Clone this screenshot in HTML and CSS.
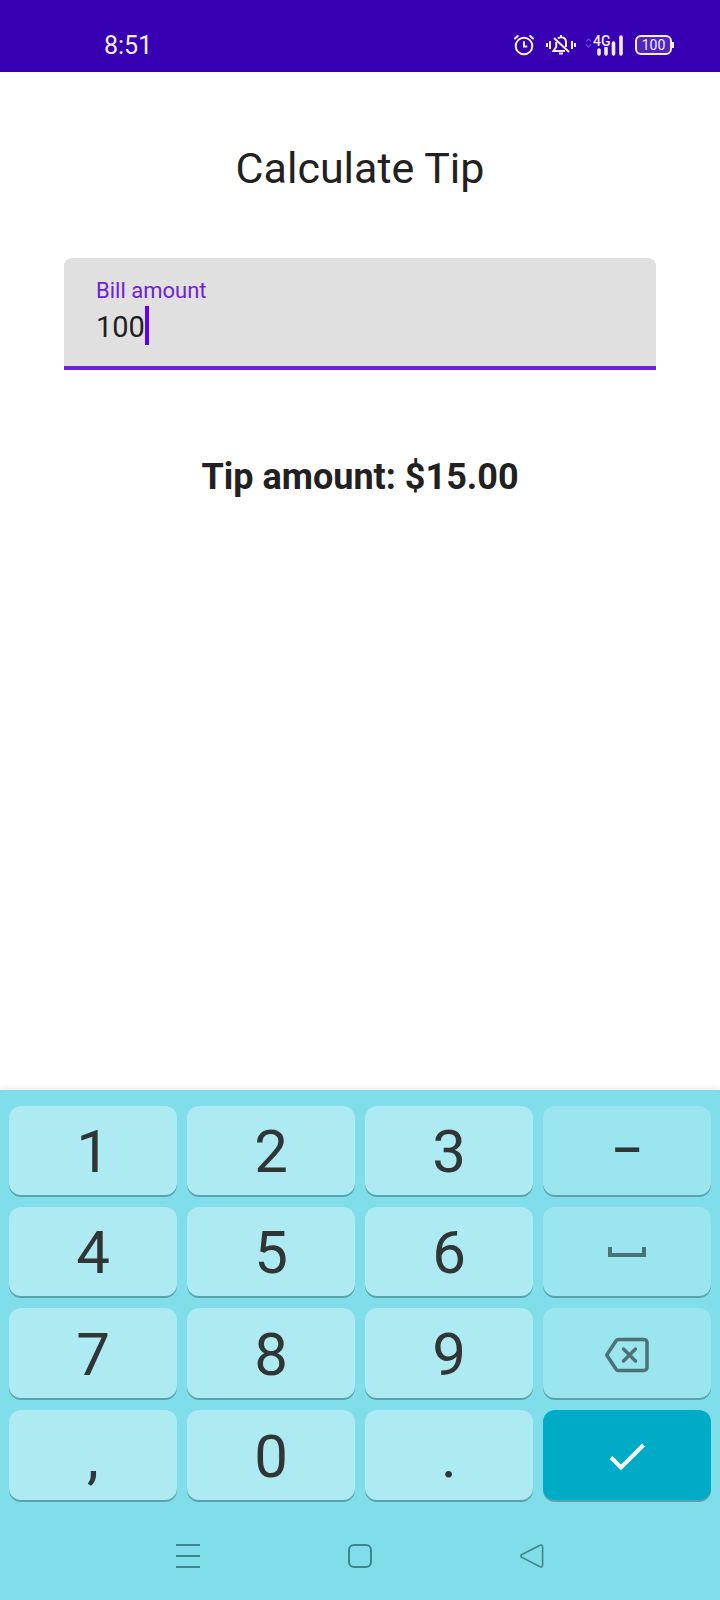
FILE: index.html
```html
<!DOCTYPE html>
<html lang="en">
<head>
<meta charset="utf-8">
<meta name="viewport" content="width=device-width, initial-scale=1">
<title>Calculate Tip</title>
<link rel="stylesheet" href="styles.css">
</head>
<body>
<div class="screen">
  <header class="status-bar">
    <time class="clock">8:51</time>
    <div class="status-icons">
      <svg class="alarm" width="22" height="22" viewBox="0 0 22 22" fill="none" stroke="currentColor" stroke-width="2" stroke-linecap="round"><circle cx="11" cy="12" r="8.3"/><path d="M2 4.5 4.800 2M20 4.500 17.200 2M11 8v4.500h2.500"/></svg>
      <svg class="vibrate" width="32" height="22" viewBox="0 0 32 22" fill="none" stroke="currentColor" stroke-width="2"><path d="M2 9v4M5 7v8M27 7v8M30 9v4M9 4l15 14M13 4.500c1-1 2-1.300 3-1.300 3 0 5 2 5 5V13M11.200 8v5L8.500 17H20M16 1v2"/><path d="M14 19.500h4" stroke-width="2"/></svg>
      <svg class="signal" width="40" height="22" viewBox="0 0 40 22"><path d="M1 7.500 3.500 5 6 7.500M1 10.500 3.500 13 6 10.500" fill="none" stroke="#6a3fc9" stroke-width="1.500"/><path d="M14 16v4M21 14v6M28.500 9v11M36 3v17" stroke="currentColor" stroke-width="3.600" stroke-linecap="round"/><text class="network" x="8" y="12">4G</text></svg>
      <span class="battery">100</span>
    </div>
  </header>

  <main class="content">
    <h1 class="title">Calculate Tip</h1>
    <div class="field">
      <label class="field-label" for="bill">Bill amount</label>
      <div class="field-row">
        <input class="field-input" id="bill" type="text" inputmode="decimal" value="100" size="3">
        <span class="caret"></span>
      </div>
    </div>
    <p class="result">Tip amount: $15.00</p>
  </main>

  <section class="keyboard" aria-label="Keyboard">
    <div class="keys">
      <button class="key">1</button>
      <button class="key">2</button>
      <button class="key">3</button>
      <button class="key key-side key-dash">–</button>
      <button class="key">4</button>
      <button class="key">5</button>
      <button class="key">6</button>
      <button class="key key-side" aria-label="Space"><svg width="40" height="12" viewBox="0 0 40 12" fill="none" stroke="currentColor" stroke-width="4"><path d="M3 0v8h34V0"/></svg></button>
      <button class="key">7</button>
      <button class="key">8</button>
      <button class="key">9</button>
      <button class="key key-side" aria-label="Backspace"><svg width="46" height="36" viewBox="0 0 46 36" fill="none" stroke="currentColor" stroke-width="3.500" stroke-linejoin="round"><path d="M14.500 2.500H40a3 3 0 0 1 3 3v25a3 3 0 0 1-3 3H14.500a3 3 0 0 1-2.400-1.200L3 18.500q-.4-.5 0-1L12.100 3.700a3 3 0 0 1 2.400-1.200Z"/><path d="m19.500 12 12 12M31.500 12l-12 12" stroke-linecap="round"/></svg></button>
      <button class="key">,</button>
      <button class="key">0</button>
      <button class="key">.</button>
      <button class="key key-enter" aria-label="Done"><svg width="36" height="28" viewBox="0 0 36 28" fill="none" stroke="currentColor" stroke-width="4"><path d="M2 14.500 12 24.500 34.500 2"/></svg></button>
    </div>
    <nav class="nav-bar" aria-label="System">
      <button class="nav-button" aria-label="Recent apps"><svg width="24" height="24" viewBox="0 0 24 24" fill="none" stroke="currentColor" stroke-width="2"><path d="M0 1h24M0 12h24M0 23h24"/></svg></button>
      <button class="nav-button" aria-label="Home"><svg width="24" height="24" viewBox="0 0 24 24" fill="none" stroke="currentColor" stroke-width="2"><rect x="1" y="1" width="22" height="22" rx="5"/></svg></button>
      <button class="nav-button" aria-label="Back"><svg width="24" height="24" viewBox="0 0 24 24" fill="none" stroke="currentColor" stroke-width="1.600"><path d="M1.500 10.800 20 1.300q2.600-1 2.600 1.700v18q0 2.700-2.600 1.700L1.500 13.200q-1.300-1.200 0-2.400Z"/></svg></button>
    </nav>
  </section>
</div>
</body>
</html>
```
FILE: styles.css
```css
* {
  box-sizing: border-box;
}

body {
  margin: 0;
  background: #fff;
  color: #212121;
  font-family: Roboto, "Noto Sans", sans-serif;
}

.screen {
  display: flex;
  flex-direction: column;
  min-height: 100vh;
}

button {
  margin: 0;
  border: 0;
  padding: 0;
  background: none;
  color: inherit;
  font: inherit;
}

svg {
  display: block;
}

/* Status bar */
.status-bar {
  display: flex;
  justify-content: space-between;
  padding: 30px 46px 10px 104px;
  background: #3700b3;
  color: #f3edff;
}

.clock {
  font-size: 25px;
  line-height: 32px;
}

.status-icons {
  display: flex;
  align-items: center;
  height: 30px;
}

.vibrate {
  margin-left: 10px;
}

.signal {
  margin-left: 8px;
}

.network {
  fill: currentColor;
  stroke: #3700b3;
  stroke-width: 2px;
  paint-order: stroke;
  font-size: 14px;
  font-weight: 500;
}

.battery {
  position: relative;
  width: 37px;
  margin: 0 2px 0 10px;
  border: 2px solid currentColor;
  border-radius: 6px;
  background: #5226be;
  font-size: 14px;
  line-height: 16px;
  text-align: center;
}

.battery::after {
  content: "";
  position: absolute;
  top: 5px;
  right: -4px;
  width: 2px;
  height: 6px;
  background: currentColor;
}

/* Form */
.content {
  flex: 1;
  padding: 70px 64px 0;
}

.title {
  margin: 0 0 64px;
  font-size: 43px;
  font-weight: 400;
  line-height: 52px;
  text-align: center;
}

.field {
  height: 112px;
  padding: 20px 32px 0;
  border-bottom: 4px solid #711fe0;
  border-radius: 8px 8px 0 0;
  background: #e0e0e0;
}

.field-label {
  display: block;
  color: #6f22d6;
  font-size: 22px;
  line-height: 26px;
}

.field-row {
  display: flex;
  align-items: flex-start;
  margin-top: 2px;
}

.field-input {
  field-sizing: content;
  min-width: 0;
  height: 42px;
  border: 0;
  padding: 0;
  outline: 0;
  background: none;
  color: inherit;
  font: 29px/42px Roboto, "Noto Sans", sans-serif;
}

.caret {
  width: 4px;
  height: 39px;
  background: #6200ee;
}

.result {
  margin: 84px 0 0;
  font-size: 36px;
  font-weight: 700;
  line-height: 46px;
  text-align: center;
}

/* Keyboard */
.keyboard {
  padding: 16px 9px 0;
  background: #80deea;
  box-shadow: 0 0 8px rgba(0, 0, 0, 0.12);
}

.keys {
  display: grid;
  grid-template-rows: 89px 89px 90px 90px;
  grid-template-columns: repeat(4, 1fr);
  gap: 12px 10px;
}

.key {
  display: flex;
  align-items: center;
  justify-content: center;
  padding-top: 3px;
  border-radius: 12px;
  background: #adeaf1;
  box-shadow: 0 2px 0 #5aa3ad;
  color: #303636;
  font-size: 60px;
  line-height: 72px;
}

.key-side {
  background: #9ae5ee;
}

.key-dash {
  padding-top: 0;
  font-size: 48px;
  font-weight: 500;
}

.key-side svg {
  color: #4d7276;
}

.key-enter {
  background: #00acc5;
  color: #fff;
}

.nav-bar {
  display: flex;
  justify-content: center;
  gap: 124px;
  padding: 32px 0 20px;
  color: #40858d;
}

.nav-button {
  display: flex;
  align-items: center;
  justify-content: center;
  width: 48px;
  height: 48px;
}
```
